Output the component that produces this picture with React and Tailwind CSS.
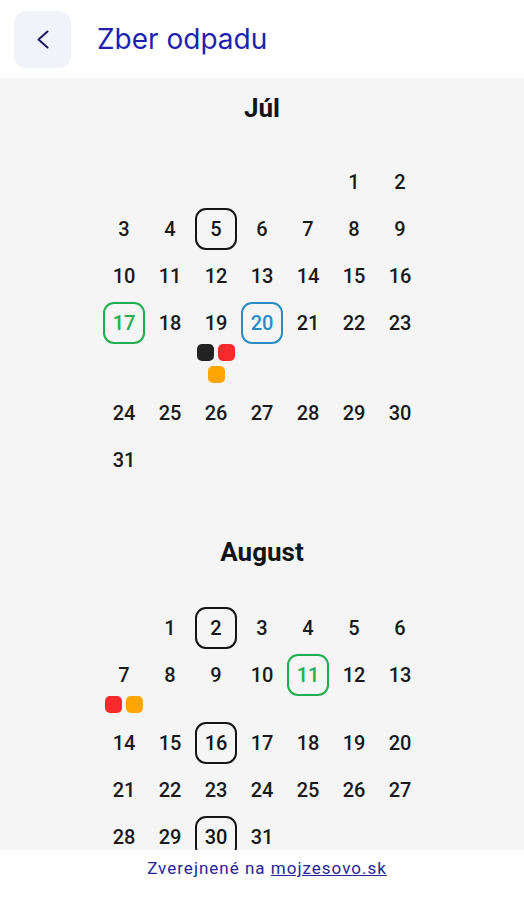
const DOT = {
  black: 'bg-[#222222]',
  red: 'bg-[#f52a2a]',
  orange: 'bg-[#ffa500]',
}

const RING = {
  black: 'border-2 border-[#151515] text-[#151515]',
  green: 'border-2 border-[#22ae4e] text-[#22ae4e]',
  blue: 'border-2 border-[#2b8cc4] text-[#2b8cc4]',
}

const months = [
  {
    name: 'Júl',
    offset: 5,
    days: 31,
    marks: { 5: 'black', 17: 'green', 20: 'blue' },
    dots: { 19: ['black', 'red', 'orange'] },
  },
  {
    name: 'August',
    offset: 1,
    days: 31,
    marks: { 2: 'black', 11: 'green', 16: 'black', 30: 'black' },
    dots: { 7: ['red', 'orange'] },
  },
]

function Month({ month, first }) {
  const cells = [
    ...Array.from({ length: month.offset }, () => null),
    ...Array.from({ length: month.days }, (_, i) => i + 1),
  ]

  return (
    <section className={first ? '' : 'mt-[56px]'}>
      <h2
        className={`h-[30px] text-center text-[26px] font-bold leading-[30px] text-[#141414] ${
          first ? 'mb-[38px]' : 'mb-[40px]'
        }`}
      >
        {month.name}
      </h2>
      <div className="mx-auto grid w-[318px] grid-cols-7 gap-x-1 gap-y-[5px]">
        {cells.map((d, i) => (
          <div key={i} className="flex flex-col items-center">
            {d && (
              <>
                <div
                  className={`flex h-[42px] w-[42px] items-center justify-center rounded-[11px] text-[20px] font-medium ${
                    month.marks[d] ? RING[month.marks[d]] : 'text-[#1a1a1a]'
                  }`}
                >
                  {d}
                </div>
                {month.dots[d] && (
                  <div className="flex w-[38px] flex-wrap justify-center gap-x-1 gap-y-[5px] pb-1">
                    {month.dots[d].map((c, j) => (
                      <span key={j} className={`size-[17px] rounded-[5px] ${DOT[c]}`} />
                    ))}
                  </div>
                )}
              </>
            )}
          </div>
        ))}
      </div>
    </section>
  )
}

export default function App() {
  return (
    <div className="flex h-[900px] w-full flex-col overflow-hidden bg-white font-['Roboto',sans-serif]">
      {/* Header */}
      <header className="flex h-[78px] shrink-0 items-center bg-white px-[14px]">
        <button className="flex size-[57px] items-center justify-center rounded-[12px] bg-[#f2f2fa]">
          <svg width="12" height="19" viewBox="0 0 12 19" fill="none">
            <polyline
              points="10.5,1.5 1.5,9.5 10.5,17.5"
              stroke="#1d1a5e"
              strokeWidth="2"
              strokeLinecap="round"
              strokeLinejoin="round"
            />
          </svg>
        </button>
        <h1 className="ml-[26px] font-['Inter',sans-serif] text-[28px] leading-none text-[#1f1fb0]">
          Zber odpadu
        </h1>
      </header>

      {/* Calendar */}
      <main className="flex-1 overflow-hidden bg-[#f5f5f5] pt-[15px]">
        {months.map((m, i) => (
          <Month key={m.name} month={m} first={i === 0} />
        ))}
      </main>

      {/* Footer */}
      <footer className="h-[50px] shrink-0 bg-white pl-[10px] pt-[8px] text-center text-[17px] leading-[20px] tracking-[1px] text-[#25259a]">
        Zverejnené na <a className="underline" href="#">mojzesovo.sk</a>
      </footer>
    </div>
  )
}
